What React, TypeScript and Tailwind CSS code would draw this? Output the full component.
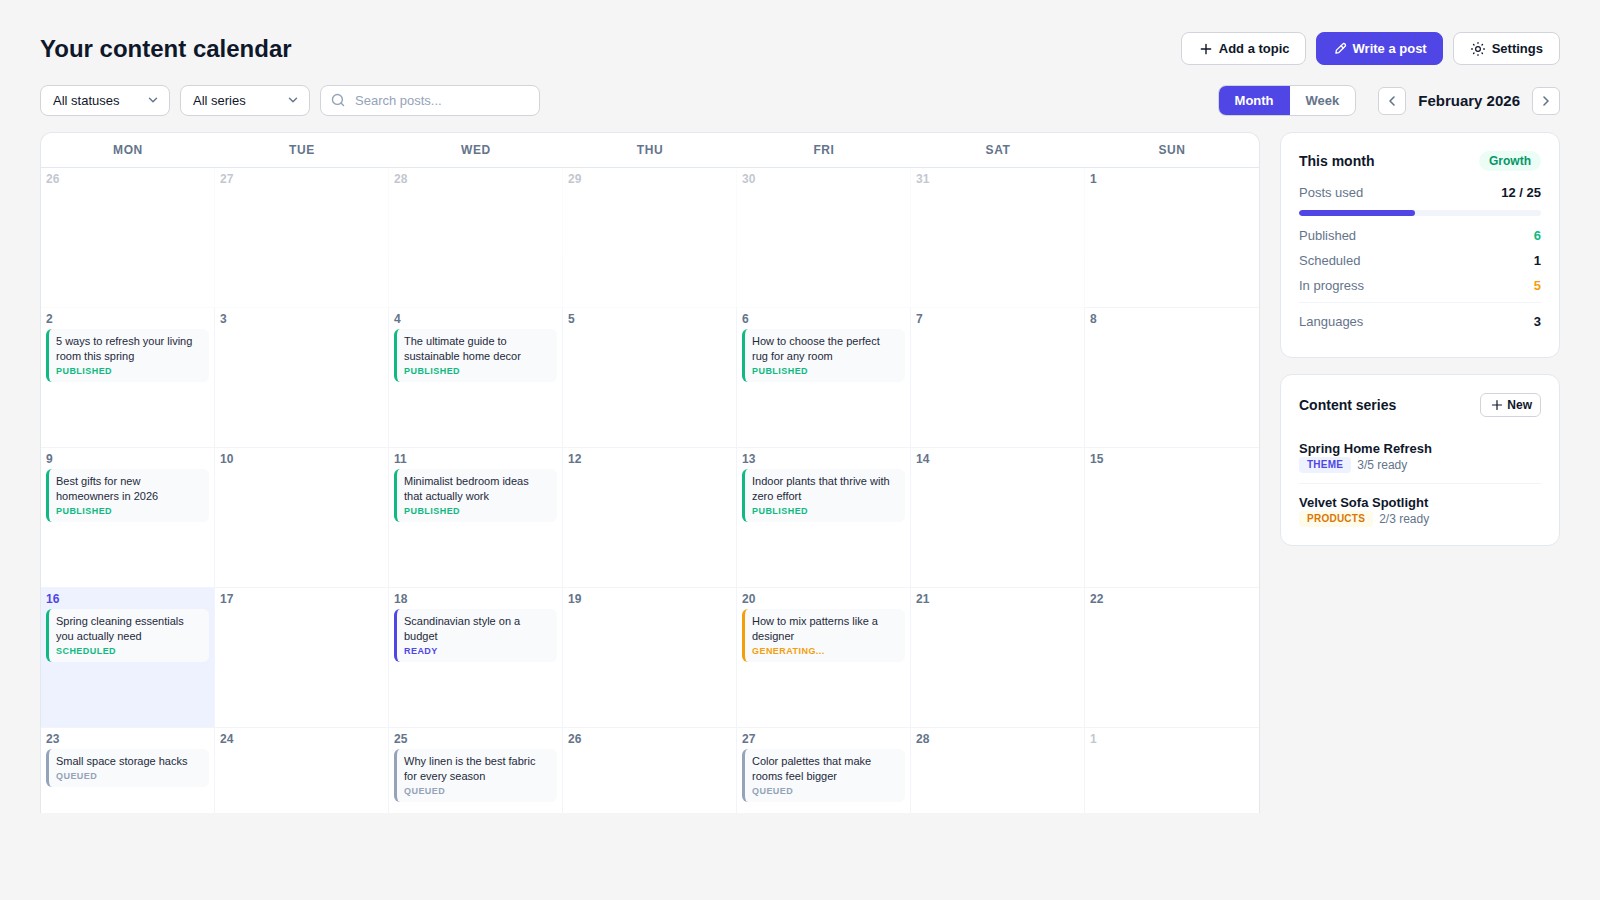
import React, { useState } from 'react';

type Status = 'published' | 'scheduled' | 'ready' | 'generating' | 'queued';

interface Post {
  title: string;
  status: Status;
}

interface Day {
  date: number;
  outside?: boolean;
  today?: boolean;
  post?: Post;
}

const weekdays = ['Mon', 'Tue', 'Wed', 'Thu', 'Fri', 'Sat', 'Sun'];

const weeks: Day[][] = [
  [
    { date: 26, outside: true },
    { date: 27, outside: true },
    { date: 28, outside: true },
    { date: 29, outside: true },
    { date: 30, outside: true },
    { date: 31, outside: true },
    { date: 1 },
  ],
  [
    { date: 2, post: { title: '5 ways to refresh your living room this spring', status: 'published' } },
    { date: 3 },
    { date: 4, post: { title: 'The ultimate guide to sustainable home decor', status: 'published' } },
    { date: 5 },
    { date: 6, post: { title: 'How to choose the perfect rug for any room', status: 'published' } },
    { date: 7 },
    { date: 8 },
  ],
  [
    { date: 9, post: { title: 'Best gifts for new homeowners in 2026', status: 'published' } },
    { date: 10 },
    { date: 11, post: { title: 'Minimalist bedroom ideas that actually work', status: 'published' } },
    { date: 12 },
    { date: 13, post: { title: 'Indoor plants that thrive with zero effort', status: 'published' } },
    { date: 14 },
    { date: 15 },
  ],
  [
    { date: 16, today: true, post: { title: 'Spring cleaning essentials you actually need', status: 'scheduled' } },
    { date: 17 },
    { date: 18, post: { title: 'Scandinavian style on a budget', status: 'ready' } },
    { date: 19 },
    { date: 20, post: { title: 'How to mix patterns like a designer', status: 'generating' } },
    { date: 21 },
    { date: 22 },
  ],
  [
    { date: 23, post: { title: 'Small space storage hacks', status: 'queued' } },
    { date: 24 },
    { date: 25, post: { title: 'Why linen is the best fabric for every season', status: 'queued' } },
    { date: 26 },
    { date: 27, post: { title: 'Color palettes that make rooms feel bigger', status: 'queued' } },
    { date: 28 },
    { date: 1, outside: true },
  ],
];

const statusStyles: Record<Status, { label: string; border: string; text: string }> = {
  published: { label: 'Published', border: 'border-[#10b981]', text: 'text-[#10b981]' },
  scheduled: { label: 'Scheduled', border: 'border-[#10b981]', text: 'text-[#10b981]' },
  ready: { label: 'Ready', border: 'border-[#4f46e5]', text: 'text-[#4f46e5]' },
  generating: { label: 'Generating...', border: 'border-[#f59e0b]', text: 'text-[#f59e0b]' },
  queued: { label: 'Queued', border: 'border-[#94a3b8]', text: 'text-[#94a3b8]' },
};

const stats = [
  { label: 'Published', value: 6, color: 'text-[#10b981]' },
  { label: 'Scheduled', value: 1, color: 'text-[#0f172a]' },
  { label: 'In progress', value: 5, color: 'text-[#f59e0b]' },
];

const series = [
  { name: 'Spring Home Refresh', tag: 'Theme', tagStyle: 'bg-[#eef2ff] text-[#4f46e5]', ready: '3/5 ready' },
  { name: 'Velvet Sofa Spotlight', tag: 'Products', tagStyle: 'bg-[#fffbeb] text-[#d97706]', ready: '2/3 ready' },
];

const Icon: React.FC<{ className: string; children: React.ReactNode }> = ({ className, children }) => (
  <svg
    className={className}
    viewBox="0 0 24 24"
    fill="none"
    stroke="currentColor"
    strokeWidth="2.4"
    strokeLinecap="round"
    strokeLinejoin="round"
    aria-hidden="true"
  >
    {children}
  </svg>
);

const FilterSelect: React.FC<{ label: string; options: string[] }> = ({ label, options }) => (
  <div className="relative w-[130px]">
    <select
      aria-label={label}
      className="h-[31px] w-full appearance-none rounded-lg border border-[#d1d5db] bg-white pl-3 pr-8 text-[13px] text-[#0f172a]"
    >
      {options.map((option) => (
        <option key={option}>{option}</option>
      ))}
    </select>
    <Icon className="pointer-events-none absolute right-2.5 top-2 size-3.5 text-[#64748b]">
      <path d="m6 9 6 6 6-6" />
    </Icon>
  </div>
);

const PostCard: React.FC<{ post: Post }> = ({ post }) => {
  const style = statusStyles[post.status];
  return (
    <div className={`mt-1 rounded-md border-l-3 bg-[#f8fafc] px-[7px] pb-1 pt-[5px] ${style.border}`}>
      <p className="text-[11px] leading-[15px] text-[#1e293b]">{post.title}</p>
      <p className={`text-[9px] font-bold uppercase leading-[14px] tracking-wider ${style.text}`}>{style.label}</p>
    </div>
  );
};

const DayCell: React.FC<{ day: Day }> = ({ day }) => (
  <td
    className={`h-[140px] border-b border-r border-[#f1f5f9] p-[5px] align-top last:border-r-0 ${day.today ? 'bg-[#eef2ff]' : ''} ${day.outside ? 'opacity-40' : ''}`}
  >
    <div className={`text-xs font-bold leading-3 ${day.today ? 'text-[#4f46e5]' : 'text-[#64748b]'}`}>{day.date}</div>
    {day.post && <PostCard post={day.post} />}
  </td>
);

const App: React.FC = () => {
  const [view, setView] = useState('Month');
  const used = 12;
  const limit = 25;

  return (
    <div className="min-h-screen bg-[#f5f5f5] px-10 pt-8 font-['Liberation_Sans',Arial,sans-serif] text-[#0f172a]">
      <header className="flex items-center justify-between">
        <h1 className="text-2xl font-bold">Your content calendar</h1>
        <div className="flex gap-2.5 text-[13px] font-bold">
          <button className="flex h-[33px] items-center gap-1.5 rounded-lg border border-[#d1d5db] bg-white pl-[17px] pr-[15px]">
            <Icon className="size-3.5">
              <path d="M12 4v16M4 12h16" />
            </Icon>
            Add a topic
          </button>
          <button className="flex h-[33px] items-center gap-1.5 rounded-lg border border-[#4f46e5] bg-[#4f46e5] pl-[17px] pr-[15px] text-white">
            <Icon className="size-[13px]">
              <path d="M16 4a2.8 2.8 0 0 1 4.5 4L9 19.500l-5.500 1 1-5.500Z" />
              <path d="m13 7 4 4" />
            </Icon>
            Write a post
          </button>
          <button className="flex h-[33px] items-center gap-1.5 rounded-lg border border-[#d1d5db] bg-white px-4">
            <Icon className="size-4">
              <circle cx="12" cy="12" r="3.6" strokeWidth="1.8" />
              <path
                strokeWidth="2"
                d="M12 2.500v1M12 20.500v1M2.500 12h1M20.500 12h1M5.300 5.300l.7.7M18 18l.7.7M5.300 18.700l.7-.7M18 6l.7-.7"
              />
            </Icon>
            Settings
          </button>
        </div>
      </header>

      <div className="mt-5 flex items-center justify-between">
        <div className="flex gap-2.5">
          <FilterSelect label="Status" options={['All statuses', 'Published', 'Scheduled', 'Queued']} />
          <FilterSelect label="Series" options={['All series', 'Spring Home Refresh', 'Velvet Sofa Spotlight']} />
          <div className="relative w-[220px]">
            <Icon className="pointer-events-none absolute left-[11px] top-2 size-3.5 text-[#94a3b8]">
              <circle cx="11" cy="11" r="8.500" />
              <path d="m17.500 17.500 4 4" />
            </Icon>
            <input
              type="text"
              aria-label="Search posts"
              placeholder="Search posts..."
              className="h-[31px] w-full rounded-lg border border-[#d1d5db] bg-white pl-[34px] pr-3 text-[13px] placeholder:text-[#94a3b8]"
            />
          </div>
        </div>
        <div className="flex items-center">
          <div className="flex h-[31px] overflow-hidden rounded-lg border border-[#d1d5db] bg-white text-[13px] font-bold">
            {['Month', 'Week'].map((name) => (
              <button
                key={name}
                onClick={() => setView(name)}
                className={view === name ? 'bg-[#4f46e5] px-4 text-white' : 'px-4 text-[#64748b]'}
              >
                {name}
              </button>
            ))}
          </div>
          <button aria-label="Previous month" className="ml-[22px] flex size-7 items-center justify-center rounded-md border border-[#d1d5db] bg-white text-[#64748b]">
            <Icon className="size-4">
              <path d="m15 6-6 6 6 6" />
            </Icon>
          </button>
          <h2 className="mx-3 pt-px text-[15px] font-bold leading-6">February 2026</h2>
          <button aria-label="Next month" className="flex size-7 items-center justify-center rounded-md border border-[#d1d5db] bg-white text-[#64748b]">
            <Icon className="size-4">
              <path d="m9 6 6 6-6 6" />
            </Icon>
          </button>
        </div>
      </div>

      <main className="mt-4 flex items-start gap-5">
        <div className="max-h-[681px] flex-1 overflow-hidden rounded-t-xl border border-b-0 border-[#e2e8f0] bg-white">
          <table className="w-full table-fixed border-separate border-spacing-0">
            <thead>
              <tr>
                {weekdays.map((name) => (
                  <th key={name} className="h-[35px] border-b border-[#e2e8f0] text-xs font-bold uppercase tracking-wider text-[#64748b]">
                    {name}
                  </th>
                ))}
              </tr>
            </thead>
            <tbody>
              {weeks.map((week, index) => (
                <tr key={index}>
                  {week.map((day) => (
                    <DayCell key={day.date} day={day} />
                  ))}
                </tr>
              ))}
            </tbody>
          </table>
        </div>

        <aside className="flex w-[280px] flex-col gap-4">
          <section className="rounded-xl border border-[#e2e8f0] bg-white px-[18px] pb-[23px] pt-[18px] text-[13px]">
            <div className="flex items-center justify-between">
              <h3 className="text-sm font-bold">This month</h3>
              <span className="rounded-full bg-[#ecfdf5] px-2.5 text-xs font-bold leading-5 text-[#059669]">Growth</span>
            </div>
            <div className="mt-[9px] flex justify-between leading-[25px]">
              <span className="text-[#64748b]">Posts used</span>
              <span className="font-bold">{used} / {limit}</span>
            </div>
            <div className="mb-[7px] mt-[5px] h-1.5 overflow-hidden rounded-full bg-[#f1f5f9]">
              <div className="h-full rounded-full bg-[#4f46e5]" style={{ width: `${(used / limit) * 100}%` }} />
            </div>
            {stats.map((stat) => (
              <div key={stat.label} className="flex justify-between leading-[25px]">
                <span className="text-[#64748b]">{stat.label}</span>
                <span className={`font-bold ${stat.color}`}>{stat.value}</span>
              </div>
            ))}
            <div className="mt-1 flex justify-between border-t border-[#f1f5f9] pt-1.5 leading-[25px]">
              <span className="text-[#64748b]">Languages</span>
              <span className="font-bold">3</span>
            </div>
          </section>

          <section className="rounded-xl border border-[#e2e8f0] bg-white px-[18px] pb-2 pt-[18px]">
            <div className="mb-[13px] flex items-center justify-between">
              <h3 className="text-sm font-bold">Content series</h3>
              <button className="flex h-6 items-center gap-1 rounded-md border border-[#d1d5db] pl-2.5 pr-2 text-xs font-bold">
                <Icon className="size-3">
                  <path d="M12 3v18M3 12h18" />
                </Icon>
                New
              </button>
            </div>
            {series.map((item) => (
              <div key={item.name} className="border-b border-[#f1f5f9] py-2.5 last:border-b-0">
                <h4 className="text-[13px] font-bold leading-[17px]">{item.name}</h4>
                <div className="flex items-center gap-1.5">
                  <span className={`rounded px-2 text-[10px] font-bold uppercase leading-4 tracking-wide ${item.tagStyle}`}>{item.tag}</span>
                  <span className="text-xs text-[#64748b]">{item.ready}</span>
                </div>
              </div>
            ))}
          </section>
        </aside>
      </main>
    </div>
  );
};

export default App;
